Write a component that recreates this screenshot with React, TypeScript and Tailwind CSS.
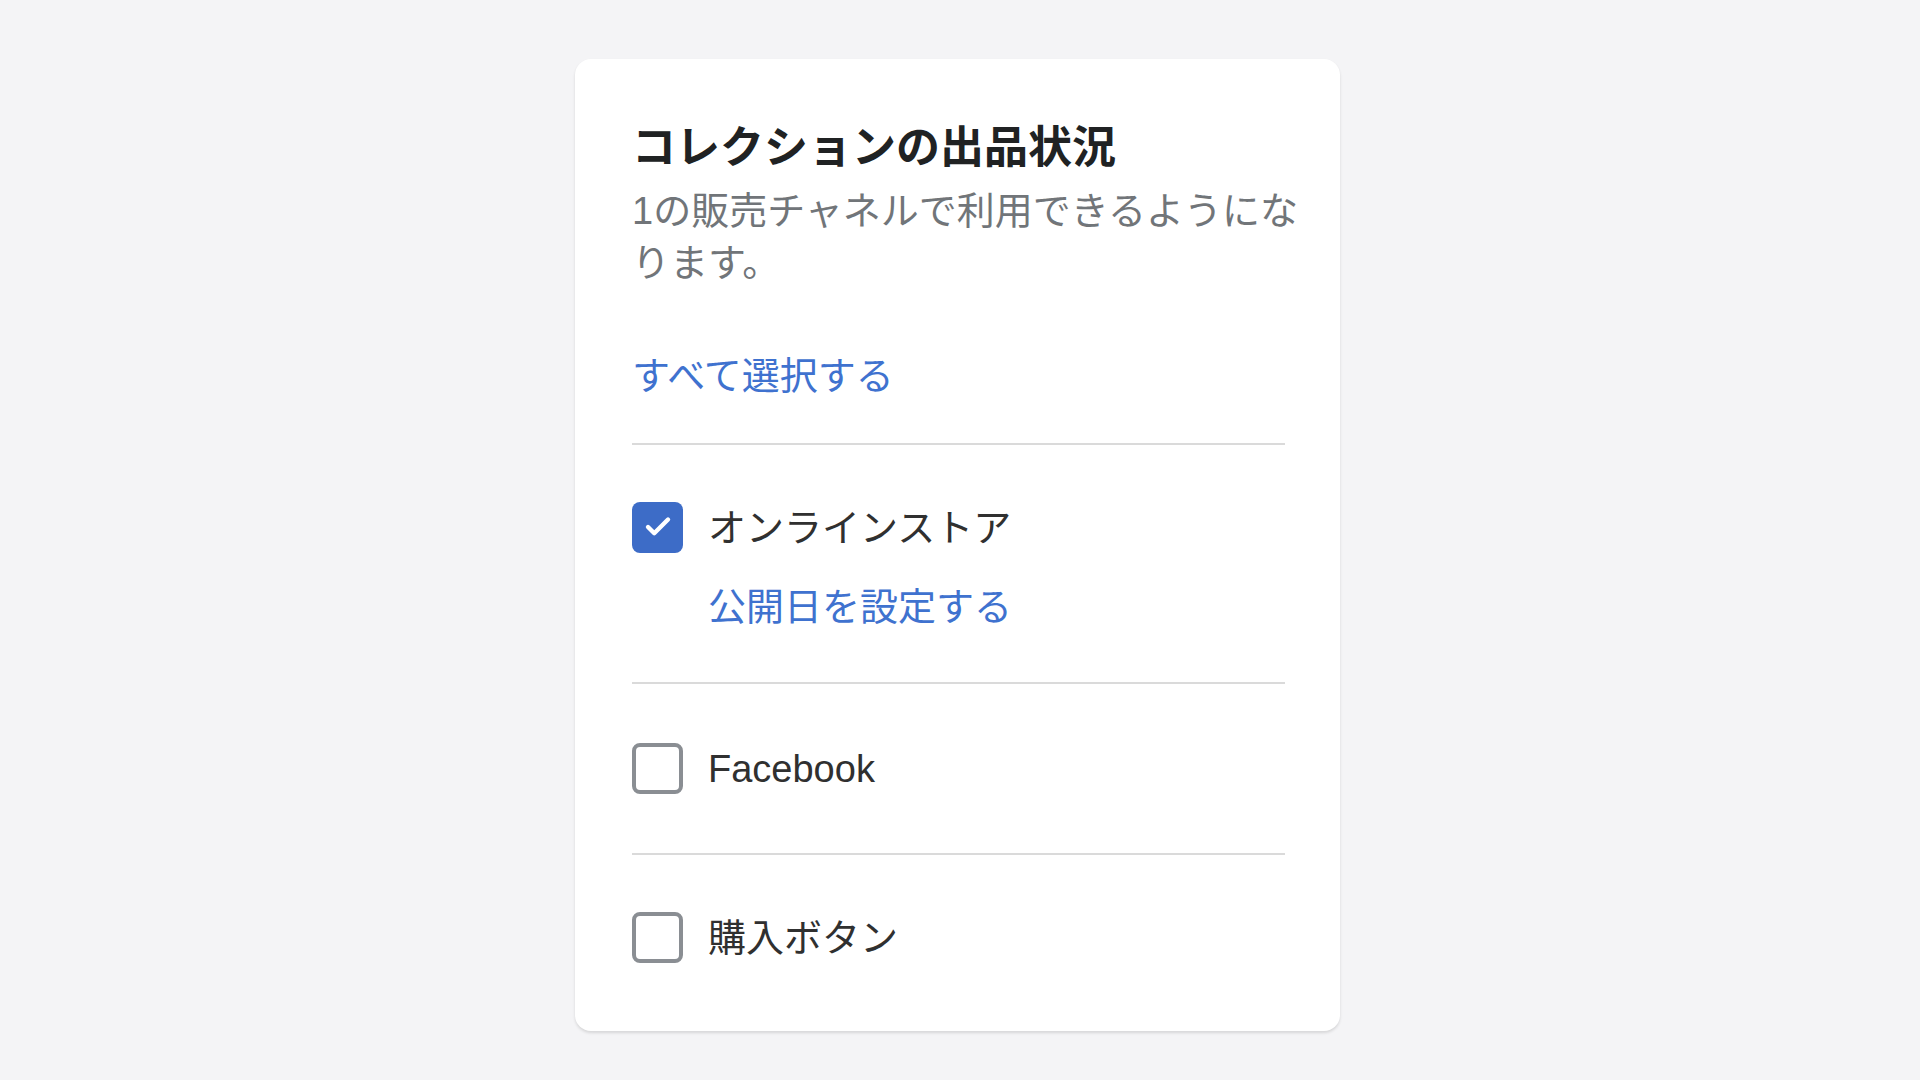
import { Check } from 'lucide-react';

const font = { fontFamily: '"Liberation Sans", "Noto Sans CJK JP", sans-serif' };

function Checkbox({ checked }: { checked: boolean }) {
  return checked ? (
    <span className="w-[51px] h-[51px] shrink-0 rounded-[8px] bg-[#3d6cc7] flex items-center justify-center">
      <Check className="w-[30px] h-[30px] text-white" strokeWidth={3.5} />
    </span>
  ) : (
    <span className="w-[51px] h-[51px] shrink-0 rounded-[8px] border-[4px] border-[#8a8e93] bg-white" />
  );
}

function Row({ label, checked }: { label: string; checked: boolean }) {
  return (
    <label className="flex items-center gap-[25px] h-[52px]">
      <Checkbox checked={checked} />
      <span className="text-[38px] leading-[52px] text-[#303030] pt-[2px]">{label}</span>
    </label>
  );
}

export default function App() {
  return (
    <div className="min-h-screen bg-[#f4f4f6] flex justify-center pt-[59px]" style={font}>
      <div className="w-[765px] h-[972px] mr-[5px] bg-white rounded-[16px] shadow-[0_2px_3px_rgba(0,0,0,0.12)] pl-[57px] pr-[55px] pt-[61px]">
        {/* Heading */}
        <h2 className="text-[44px] leading-[56px] font-bold text-[#202223]">
          コレクションの出品状況
        </h2>
        <p className="mt-[9px] w-[690px] text-[38px] leading-[52px] text-[#717579]">
          1の販売チャネルで利用できるようにな
          <br />
          ります。
        </p>
        <button className="mt-[61px] text-[38px] leading-[52px] text-[#3f72cf] block">
          すべて選択する
        </button>

        {/* Channels */}
        <div className="mt-[41px] border-t-[2px] border-[#dadada] pt-[56px] pb-[49px]">
          <Row label="オンラインストア" checked />
          <button className="mt-[28px] ml-[76px] text-[38px] leading-[52px] text-[#3f72cf] block">
            公開日を設定する
          </button>
        </div>
        <div className="border-t-[2px] border-[#dadada] pt-[58px] pb-[59px]">
          <Row label="Facebook" checked={false} />
        </div>
        <div className="border-t-[2px] border-[#dadada] pt-[56px]">
          <Row label="購入ボタン" checked={false} />
        </div>
      </div>
    </div>
  );
}
